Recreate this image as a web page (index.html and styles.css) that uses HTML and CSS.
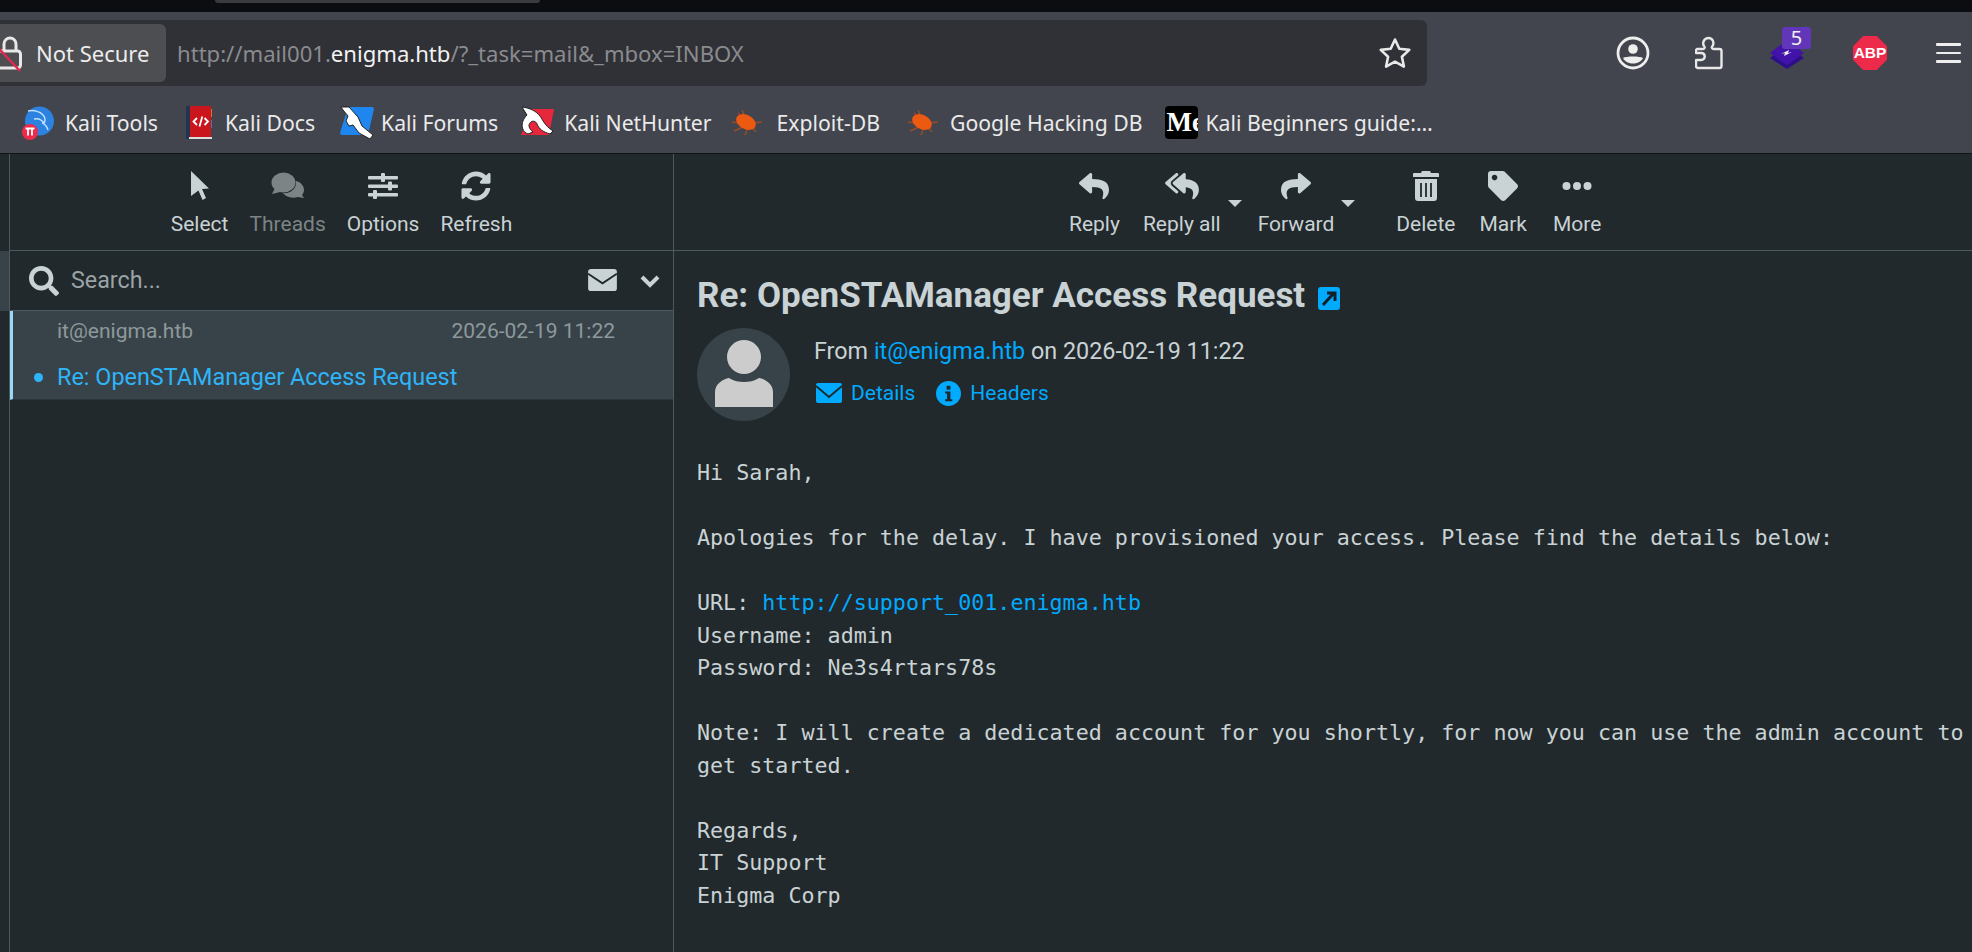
FILE: index.html
```html
<!DOCTYPE html>
<html>
<head>
  <title>Roundcube Webmail :: Re: OpenSTAManager Access Request</title>
  <link rel="stylesheet" href="styles.css">
</head>
<body>
  <div class="tabstrip"><div class="tabstrip-tab"></div></div>

  <div class="browser-bar">
    <div class="nav-row">
      <div class="urlbar">
        <div class="secure-chip">
          <svg class="lock-icon" viewBox="0 0 26 36" width="26" height="36">
            <path d="M8 16V9a6 6 0 0 1 12 0v7" fill="none" stroke="#e8e8e8" stroke-width="3"/>
            <rect x="1.5" y="16" width="23" height="17" rx="3" fill="none" stroke="#e8e8e8" stroke-width="3"/>
            <path d="M-8 2 L24 36" stroke="#e22850" stroke-width="2.5"/>
          </svg>
          <span>Not Secure</span>
        </div>
        <div class="url-text">http://mail001.<b>enigma.htb</b>/?_task=mail&amp;_mbox=INBOX</div>
        <svg class="star-icon" viewBox="0 0 34 32" width="34" height="32">
          <path d="M17 2.5l4.3 9.2 10 1.2-7.4 6.8 2 9.9L17 24.7l-8.9 4.9 2-9.9-7.4-6.8 10-1.2z" fill="none" stroke="#e8e8e8" stroke-width="2.6" stroke-linejoin="round"/>
        </svg>
      </div>
      <div class="ext-icons">
        <svg class="ext ext-account" viewBox="0 0 34 34" width="34" height="34">
          <circle cx="17" cy="17" r="15" fill="none" stroke="#eee" stroke-width="2.8"/>
          <circle cx="17" cy="13" r="4.8" fill="#eee"/>
          <path d="M7 22c3-2 17-2 20 0-2 4-6 5.500-10 5.500S9 26 7 22z" fill="#eee"/>
        </svg>
        <svg class="ext ext-puzzle" viewBox="0 0 28 34" width="28" height="34">
          <path d="M2 13h6c2 0 2-2 1-3-2-3 0-8 4.500-8s6 5 4 8c-1 1-1 3 1 3h6a2 2 0 0 1 2 2v15a2 2 0 0 1-2 2H3a2 2 0 0 1-2-2v-6h5c5 0 5-7 0-7H1v-2a2 2 0 0 1 1-2z" fill="none" stroke="#e8e8e8" stroke-width="2.4" stroke-linejoin="round"/>
        </svg>
        <div class="ext ext-stack">
          <svg viewBox="0 0 36 32" width="36" height="32">
            <path d="M18 6l17 13-17 11L1 19z" fill="#2e0f8a"/>
            <path d="M18 1l17 13-17 12L1 14z" fill="#4213a8"/>
            <path d="M12 15l8-4-1 3 4-1-8 4 1-3z" fill="#eee"/>
          </svg>
          <span class="ext-badge">5</span>
        </div>
        <div class="ext ext-abp">ABP</div>
        <div class="hamburger"><i></i><i></i><i></i></div>
      </div>
    </div>

    <div class="bookmarks">
      <a class="bm bm-tools">
        <svg viewBox="0 0 32 34" width="32" height="34">
          <circle cx="17.500" cy="15" r="14.500" fill="#2b82e0"/>
          <path d="M6 5c5-1 12 0 15 4 3 3 2 7 1 8-2-3-6-5-10-4M20 17c4 1 5 4 6 7" fill="none" stroke="#bfe0ff" stroke-width="1.500"/>
          <circle cx="8" cy="26" r="8" fill="#ee2a4a"/>
          <path d="M3.500 22.500h9M6 22.500v7M10 22.500v7" stroke="#fff" stroke-width="1.800"/>
        </svg>
        Kali Tools
      </a>
      <a class="bm bm-docs">
        <svg viewBox="0 0 26 34" width="26" height="34">
          <rect x="0" y="0" width="25" height="31" fill="#c9151b"/>
          <rect x="0" y="0" width="4" height="33" fill="#23344f"/>
          <rect x="25" y="3" width="1" height="8" fill="#d9752a"/>
          <rect x="25" y="14" width="1" height="8" fill="#3f7fb0"/>
          <rect x="3" y="31" width="23" height="2" fill="#ddd"/>
          <path d="M11 12l-3.500 3.500L11 19M18.500 12l3.500 3.500-3.500 3.500M16.300 10.500l-2.800 10" fill="none" stroke="#fff" stroke-width="1.800"/>
        </svg>
        Kali Docs
      </a>
      <a class="bm bm-forums">
        <svg viewBox="0 0 34 34" width="34" height="34">
          <path d="M8 1h24a2 2 0 0 1 2 2L28 29H2a2 2 0 0 1-2-2z" fill="#1f86f0"/>
          <path d="M1 1l8 0 9 10 4 9 11 9-3 4-11-6-6-8-4 1-3-5 2-5-5-6z" fill="#fff" stroke="#222" stroke-width="1"/>
        </svg>
        Kali Forums
      </a>
      <a class="bm bm-hunter">
        <svg viewBox="0 0 34 34" width="34" height="34">
          <path d="M12 3h22l-5 26H1z" fill="#e7283c"/>
          <path d="M2 1c8 1 14 4 18 9 3 4 4 9 13 15l-3 3c-7-2-11-5-13-10-1-3-5-4-7-1-2 2-1 6 3 9l-5 2C2 26-1 17 7 9z" fill="#fff" stroke="#222" stroke-width="1"/>
        </svg>
        Kali NetHunter
      </a>
      <a class="bm bm-exploit">
        <svg viewBox="0 0 32 26" width="32" height="26">
          <path d="M7 3l7 7M1 12l8 1M31 12l-9 1M3 21l9-4M14 25l3-7M25 22l-5-6M11 0l3 8" stroke="#9a4a28" stroke-width="1.500"/>
          <ellipse cx="15" cy="12" rx="10.500" ry="7" transform="rotate(28 15 12)" fill="#ec5a12"/>
        </svg>
        Exploit-DB
      </a>
      <a class="bm bm-ghdb">
        <svg viewBox="0 0 32 26" width="32" height="26">
          <path d="M7 3l7 7M1 12l8 1M31 12l-9 1M3 21l9-4M14 25l3-7M25 22l-5-6M11 0l3 8" stroke="#9a4a28" stroke-width="1.500"/>
          <ellipse cx="15" cy="12" rx="10.500" ry="7" transform="rotate(28 15 12)" fill="#ec5a12"/>
        </svg>
        Google Hacking DB
      </a>
      <a class="bm bm-medium">
        <span class="medium-icon">Me</span>
        Kali Beginners guide:…
      </a>
    </div>
  </div>

  <div class="mail-app">
    <div class="folder-strip">
      <div class="folder-strip-active"></div>
    </div>

    <div class="list-pane">
      <div class="toolbar list-toolbar">
        <div class="tool tool-select">
          <svg viewBox="0 0 20 30" width="20" height="30"><path d="M1 0l18 17.500-7 .5 4 9-3.500 2-4-9.500L1 25z" fill="#c9d2d4"/></svg>
          <span>Select</span>
        </div>
        <div class="tool tool-threads disabled">
          <svg viewBox="0 0 34 28" width="34" height="28">
            <path d="M25 9c5 1 8 5 8 9 0 2-1 4-2 5l2 3-6-1c-7 2-13-1-15-4 7 1 14-4 13-12z" fill="#7c8486"/>
            <ellipse cx="12.500" cy="10.500" rx="12" ry="10" fill="#7c8486"/>
            <path d="M4 16l-3 6 8-2z" fill="#7c8486"/>
          </svg>
          <span>Threads</span>
        </div>
        <div class="tool tool-options">
          <svg viewBox="0 0 30 26" width="30" height="26">
            <rect x="0" y="3" width="30" height="3.500" rx="1" fill="#c9d2d4"/>
            <rect x="13" y="0" width="4" height="9" rx="1" fill="#c9d2d4"/>
            <rect x="0" y="11.500" width="30" height="3.500" rx="1" fill="#c9d2d4"/>
            <rect x="20" y="8.500" width="4" height="9" rx="1" fill="#c9d2d4"/>
            <rect x="0" y="20" width="30" height="3.500" rx="1" fill="#c9d2d4"/>
            <rect x="5" y="17" width="4" height="9" rx="1" fill="#c9d2d4"/>
          </svg>
          <span>Options</span>
        </div>
        <div class="tool tool-refresh">
          <svg viewBox="0 0 512 512" width="30" height="30"><path fill="#c9d2d4" d="M370.72 133.28C339.458 104.008 298.888 87.962 255.848 88c-77.458.068-144.328 53.178-162.791 126.85-1.344 5.363-6.122 9.15-11.651 9.15H24.103c-7.498 0-13.194-6.807-11.807-14.176C33.933 94.924 134.813 8 256 8c66.448 0 126.791 26.136 171.315 68.685L463.03 40.97C478.149 25.851 504 36.559 504 57.941V192c0 13.255-10.745 24-24 24H345.941c-21.382 0-32.09-25.851-16.971-40.971l41.75-41.749zM32 296h134.059c21.382 0 32.09 25.851 16.971 40.971l-41.75 41.75c31.262 29.273 71.835 45.319 114.876 45.28 77.418-.07 144.315-53.144 162.787-126.849 1.344-5.363 6.122-9.15 11.651-9.15h57.304c7.498 0 13.194 6.807 11.807 14.176C478.067 417.076 377.187 504 256 504c-66.448 0-126.791-26.136-171.315-68.685L48.97 471.03C33.851 486.149 8 475.441 8 454.059V320c0-13.255 10.745-24 24-24z"/></svg>
          <span>Refresh</span>
        </div>
      </div>

      <div class="searchbar">
        <svg class="search-icon" viewBox="0 0 512 512" width="30" height="30"><path fill="#c9d2d4" d="M505 442.7L405.3 343c-4.500-4.500-10.600-7-17-7H372c27.600-35.300 44-79.700 44-128C416 93.100 322.900 0 208 0S0 93.100 0 208s93.100 208 208 208c48.300 0 92.700-16.400 128-44v16.300c0 6.400 2.500 12.500 7 17l99.700 99.700c9.400 9.400 24.600 9.400 33.900 0l28.300-28.300c9.400-9.400 9.400-24.600.1-34zM208 336c-70.700 0-128-57.200-128-128 0-70.700 57.200-128 128-128 70.700 0 128 57.200 128 128 0 70.700-57.200 128-128 128z"/></svg>
        <span class="search-text">Search...</span>
        <svg class="search-env" viewBox="0 0 30 24" width="29" height="23">
          <rect width="30" height="23" rx="3" fill="#c9d2d4"/>
          <path d="M0 5l15 10L30 5" fill="none" stroke="#21292c" stroke-width="2"/>
        </svg>
        <svg class="search-caret" viewBox="0 0 20 14" width="20" height="14"><path d="M2 3l8 8 8-8" fill="none" stroke="#c9d2d4" stroke-width="4"/></svg>
      </div>

      <div class="message-row">
        <div class="message-top">
          <span class="message-from">it@enigma.htb</span>
          <span class="message-date">2026-02-19 11:22</span>
        </div>
        <div class="message-subject">Re: OpenSTAManager Access Request</div>
      </div>
    </div>

    <div class="content-pane">
      <div class="toolbar mail-toolbar">
        <div class="tool tool-reply">
          <svg viewBox="0 0 512 512" width="32" height="30"><path fill="#c9d2d4" d="M8.309 189.836L184.313 37.851C199.719 24.546 224 35.347 224 56.015v80.053c160.629 1.839 288 34.032 288 186.258 0 61.441-39.581 122.309-83.333 154.132-13.653 9.931-33.111-2.533-28.077-18.631 45.344-145.012-21.507-183.51-176.59-185.742V360c0 20.7-24.3 31.453-39.687 18.164l-176.004-152c-11.071-9.562-11.086-26.753 0-36.328z"/></svg>
          <span>Reply</span>
        </div>
        <div class="tool tool-replyall has-drop">
          <svg viewBox="0 0 576 512" width="34" height="30"><path fill="#c9d2d4" d="M136.309 189.836L312.313 37.851C327.72 24.546 352 35.348 352 56.015v82.763c129.182 10.231 224 52.212 224 183.548 0 61.441-39.582 122.309-83.333 154.132-13.653 9.931-33.111-2.533-28.077-18.631 38.512-123.162-3.922-169.482-112.59-182.015v84.175c0 20.701-24.3 31.453-39.687 18.164L136.309 226.164c-11.071-9.561-11.086-26.753 0-36.328zm-128 36.328L184.313 378.15C199.7 391.439 224 380.687 224 359.986v-15.818l-108.606-93.785A55.96 55.96 0 0 1 96 207.998a55.953 55.953 0 0 1 19.393-42.38L224 71.832V56.015c0-20.667-24.28-31.469-39.687-18.164L8.309 189.836c-11.086 9.575-11.071 26.767 0 36.328z"/></svg>
          <span>Reply all</span>
        </div>
        <div class="tool tool-forward has-drop">
          <svg viewBox="0 0 512 512" width="32" height="30"><path fill="#c9d2d4" d="M503.691 189.836L327.687 37.851C312.281 24.546 288 35.347 288 56.015v80.053C127.371 137.907 0 170.1 0 322.326c0 61.441 39.581 122.309 83.333 154.132 13.653 9.931 33.111-2.533 28.077-18.631C66.066 312.814 132.917 274.316 288 272.085V360c0 20.7 24.3 31.453 39.687 18.164l176.004-152c11.071-9.562 11.086-26.753 0-36.328z"/></svg>
          <span>Forward</span>
        </div>
        <div class="tool tool-delete">
          <svg viewBox="0 0 26 30" width="26" height="30">
            <path d="M9 0h8l1 2h7a1 1 0 0 1 1 1v3H0V3a1 1 0 0 1 1-1h7z" fill="#c9d2d4"/>
            <path d="M2 8h22v19a3 3 0 0 1-3 3H5a3 3 0 0 1-3-3z" fill="#c9d2d4"/>
            <path d="M8 12v14M13 12v14M18 12v14" stroke="#21292c" stroke-width="1.800"/>
          </svg>
          <span>Delete</span>
        </div>
        <div class="tool tool-mark">
          <svg viewBox="0 0 512 512" width="30" height="30"><path fill="#c9d2d4" d="M0 252.118V48C0 21.49 21.49 0 48 0h204.118a48 48 0 0 1 33.941 14.059l211.882 211.882c18.745 18.745 18.745 49.137 0 67.882L293.823 497.941c-18.745 18.745-49.137 18.745-67.882 0L14.059 286.059A48 48 0 0 1 0 252.118zM112 64c-26.51 0-48 21.49-48 48s21.49 48 48 48 48-21.49 48-48-21.49-48-48-48z"/></svg>
          <span>Mark</span>
        </div>
        <div class="tool tool-more">
          <svg viewBox="0 0 30 30" width="30" height="30">
            <circle cx="4.500" cy="15" r="4" fill="#c9d2d4"/>
            <circle cx="15" cy="15" r="4" fill="#c9d2d4"/>
            <circle cx="25.500" cy="15" r="4" fill="#c9d2d4"/>
          </svg>
          <span>More</span>
        </div>
      </div>

      <div class="mail-view">
        <h2 class="mail-subject">
          Re: OpenSTAManager Access Request
          <svg class="open-icon" viewBox="0 0 22 23" width="22" height="23">
            <rect width="22" height="23" rx="3" fill="#00aaff"/>
            <path d="M5 18L15 7M9 6h8v8" fill="none" stroke="#12202a" stroke-width="3"/>
          </svg>
        </h2>

        <div class="mail-head">
          <div class="avatar">
            <svg viewBox="0 0 60 67" width="60" height="67">
              <ellipse cx="30" cy="17" rx="17" ry="17" fill="#ccc"/>
              <path d="M1 67V52c0-8 8-13 14-14 5 3 10 4 15 4s10-1 15-4c6 1 14 6 14 14v15z" fill="#ccc"/>
            </svg>
          </div>
          <div class="head-info">
            <div class="head-from">From <a>it@enigma.htb</a> on 2026-02-19 11:22</div>
            <div class="head-links">
              <a class="head-link">
                <svg viewBox="0 0 26 20" width="26" height="20">
                  <rect width="26" height="20" rx="2" fill="#00aaff"/>
                  <path d="M0 3l13 11L26 3" fill="none" stroke="#21292c" stroke-width="1.800"/>
                </svg>
                Details
              </a>
              <a class="head-link">
                <svg viewBox="0 0 26 26" width="25" height="25">
                  <circle cx="13" cy="13" r="13" fill="#00aaff"/>
                  <rect x="11" y="5" width="4" height="4" fill="#21292c"/>
                  <path d="M9.500 11h5.500v8h2v2H9.500v-2h2v-6h-2z" fill="#21292c"/>
                </svg>
                Headers
              </a>
            </div>
          </div>
        </div>

        <pre class="mail-body">Hi Sarah,

Apologies for the delay. I have provisioned your access. Please find the details below:

URL: <a>http://support_001.enigma.htb</a>
Username: admin
Password: Ne3s4rtars78s

Note: I will create a dedicated account for you shortly, for now you can use the admin account to
get started.

Regards,
IT Support
Enigma Corp</pre>
      </div>
    </div>
  </div>
</body>
</html>
```

FILE: styles.css
```css
html, body {
  height: 100%;
}

body {
  margin: 0;
  width: 1972px;
  height: 952px;
  overflow: hidden;
  background-color: #21292c;
  font-family: Roboto, sans-serif;
  display: flex;
  flex-direction: column;
}

/* browser chrome */
.tabstrip {
  height: 12px;
  flex: none;
  background-color: #0c0d11;
}

.tabstrip-tab {
  margin-left: 215px;
  width: 325px;
  height: 3px;
  background-color: #3a3b40;
  border-radius: 0 0 5px 5px;
}

.browser-bar {
  flex: none;
  height: 141px;
  background-color: #42454d;
  border-bottom: 1px solid #111417;
  font-family: "Noto Sans", sans-serif;
}

.nav-row {
  display: flex;
  height: 74px;
  padding-top: 8px;
  box-sizing: border-box;
}

.urlbar {
  width: 1427px;
  height: 66px;
  background-color: #303136;
  border-radius: 0 6px 6px 0;
  display: flex;
  align-items: center;
  flex: none;
}

.secure-chip {
  width: 166px;
  height: 58px;
  background-color: #4d4e52;
  border-radius: 0 6px 6px 0;
  display: flex;
  align-items: center;
  color: #ececec;
  font-size: 22px;
  flex: none;
  overflow: hidden;
}

.lock-icon {
  margin-left: -4px;
  overflow: visible;
}

.secure-chip span {
  margin-left: 14px;
  white-space: nowrap;
}

.url-text {
  margin-left: 11px;
  font-size: 22.1px;
  color: #8a8b8f;
  white-space: nowrap;
}

.url-text b {
  font-weight: normal;
  color: #f2f2f2;
}

.star-icon {
  margin-left: auto;
  margin-right: 15px;
}

.ext-icons {
  display: flex;
  align-items: center;
  height: 66px;
  padding-left: 189px;
}

.ext {
  flex: none;
}

.ext-puzzle {
  margin-left: 45px;
}

.ext-stack {
  position: relative;
  margin-left: 46px;
  width: 36px;
  height: 32px;
  top: 2px;
}

.ext-badge {
  position: absolute;
  left: 13px;
  top: -12px;
  width: 29px;
  height: 22px;
  background-color: #6236b8;
  border-radius: 3px;
  color: #f0f0f0;
  font-size: 20px;
  line-height: 22px;
  text-align: center;
}

.ext-abp {
  margin-left: 48px;
  width: 34px;
  height: 34px;
  background-color: #ee2a4a;
  clip-path: polygon(30% 0, 70% 0, 100% 30%, 100% 70%, 70% 100%, 30% 100%, 0 70%, 0 30%);
  color: #fff;
  font-family: "Liberation Sans", sans-serif;
  font-weight: bold;
  font-size: 15.5px;
  line-height: 34px;
  text-align: center;
}

.hamburger {
  margin-left: 49px;
  width: 25px;
  display: flex;
  flex-direction: column;
  gap: 6px;
}

.hamburger i {
  display: block;
  height: 2.500px;
  background-color: #eee;
  border-radius: 1px;
}

.bookmarks {
  display: flex;
  align-items: center;
  height: 66px;
  padding-left: 22px;
  padding-top: 7px;
  box-sizing: border-box;
}

.bm {
  display: flex;
  align-items: center;
  gap: 11px;
  color: #eaeaea;
  font-size: 21.2px;
  white-space: nowrap;
  flex: none;
}

.bm-docs { margin-left: 28px; gap: 13px; }
.bm-forums { margin-left: 25px; gap: 7px; }
.bm-hunter { margin-left: 22px; gap: 10px; }
.bm-exploit { margin-left: 19px; gap: 14px; }
.bm-ghdb { margin-left: 27px; gap: 11px; }
.bm-medium { margin-left: 23px; gap: 7px; }

.medium-icon {
  width: 33px;
  height: 33px;
  background-color: #000;
  border-radius: 4px;
  overflow: hidden;
  color: #fff;
  font-family: "Liberation Serif", serif;
  font-weight: bold;
  font-size: 27px;
  line-height: 33px;
  text-indent: 1px;
}

/* mail app */
.mail-app {
  flex: 1;
  display: flex;
  min-height: 0;
  color: #c9d2d4;
}

.folder-strip {
  width: 10px;
  flex: none;
  box-sizing: border-box;
  border-right: 1px solid #4b5a60;
  padding-top: 97px;
}

.folder-strip-active {
  height: 60px;
  background-color: #374349;
}

.list-pane {
  width: 664px;
  flex: none;
  box-sizing: border-box;
  border-right: 1px solid #4b5a60;
}

.content-pane {
  flex: 1;
  min-width: 0;
}

.toolbar {
  height: 97px;
  box-sizing: border-box;
  border-bottom: 1px solid #4b5a60;
  display: flex;
  padding-top: 17px;
}

.list-toolbar {
  justify-content: center;
  gap: 21px;
}

.mail-toolbar {
  padding-left: 395px;
}

.tool {
  position: relative;
  display: flex;
  flex-direction: column;
  align-items: center;
  font-size: 21px;
  line-height: 24px;
}

.tool svg {
  height: 30px;
  margin-bottom: 11px;
}

.tool span {
  white-space: nowrap;
}

.tool.disabled {
  color: #7c8486;
}

.tool-replyall { margin-left: 23px; }
.tool-forward { margin-left: 37px; }
.tool-delete { margin-left: 62px; }
.tool-mark { margin-left: 24px; }
.tool-more { margin-left: 26px; }

.has-drop::after {
  content: "";
  position: absolute;
  right: -21px;
  top: 29px;
  border-left: 7px solid transparent;
  border-right: 7px solid transparent;
  border-top: 7px solid #c9d2d4;
}

.searchbar {
  height: 60px;
  box-sizing: border-box;
  border-bottom: 1px solid #4b5a60;
  display: flex;
  align-items: center;
  padding: 0 13px 0 19px;
}

.search-text {
  margin-left: 12px;
  margin-bottom: 2px;
  font-size: 23.3px;
  color: #9aa3a5;
}

.search-env {
  margin-left: auto;
}

.search-caret {
  margin-left: 23px;
}

.message-row {
  height: 89px;
  box-sizing: border-box;
  background-color: #374349;
  border-left: 3px solid #9bd8f7;
  border-bottom: 1px solid #2b3438;
  padding: 8px 58px 0 44px;
}

.message-top {
  display: flex;
  justify-content: space-between;
  font-size: 21px;
  line-height: 24px;
  color: #8e999c;
}

.message-subject {
  position: relative;
  margin-top: 21px;
  font-size: 23.4px;
  line-height: 26px;
  color: #2fb4f8;
  white-space: nowrap;
}

.message-subject::before {
  content: "";
  position: absolute;
  left: -23px;
  top: 9px;
  width: 9px;
  height: 9px;
  border-radius: 50%;
  background-color: #2fb4f8;
}

.mail-view {
  padding: 0 0 0 23px;
}

.mail-subject {
  margin: 0;
  padding-top: 24px;
  display: flex;
  align-items: center;
  gap: 13px;
  font-size: 35px;
  line-height: 42px;
  font-weight: bold;
  color: #c9d2d4;
}

.open-icon {
  margin-top: 4px;
}

.mail-head {
  display: flex;
  margin-top: 11px;
}

.avatar {
  width: 93px;
  height: 93px;
  border-radius: 50%;
  background-color: #374349;
  display: flex;
  justify-content: center;
  align-items: flex-end;
  overflow: hidden;
  flex: none;
}

.avatar svg {
  margin-bottom: 14px;
}

.head-info {
  margin-left: 24px;
}

.head-from {
  font-size: 23.35px;
  line-height: 28px;
  margin-top: 9px;
}

.head-from a {
  color: #00aaff;
}

.head-links {
  display: flex;
  gap: 21px;
  margin-top: 14px;
  margin-left: 2px;
}

.head-link {
  display: flex;
  align-items: center;
  gap: 9px;
  font-size: 21px;
  line-height: 28px;
  color: #00aaff;
}

.mail-body {
  margin: 36px 0 0;
  font-family: "DejaVu Sans Mono", monospace;
  font-size: 21.7px;
  line-height: 32.500px;
  color: #c9d2d4;
}

.mail-body a {
  color: #00aaff;
}
```
